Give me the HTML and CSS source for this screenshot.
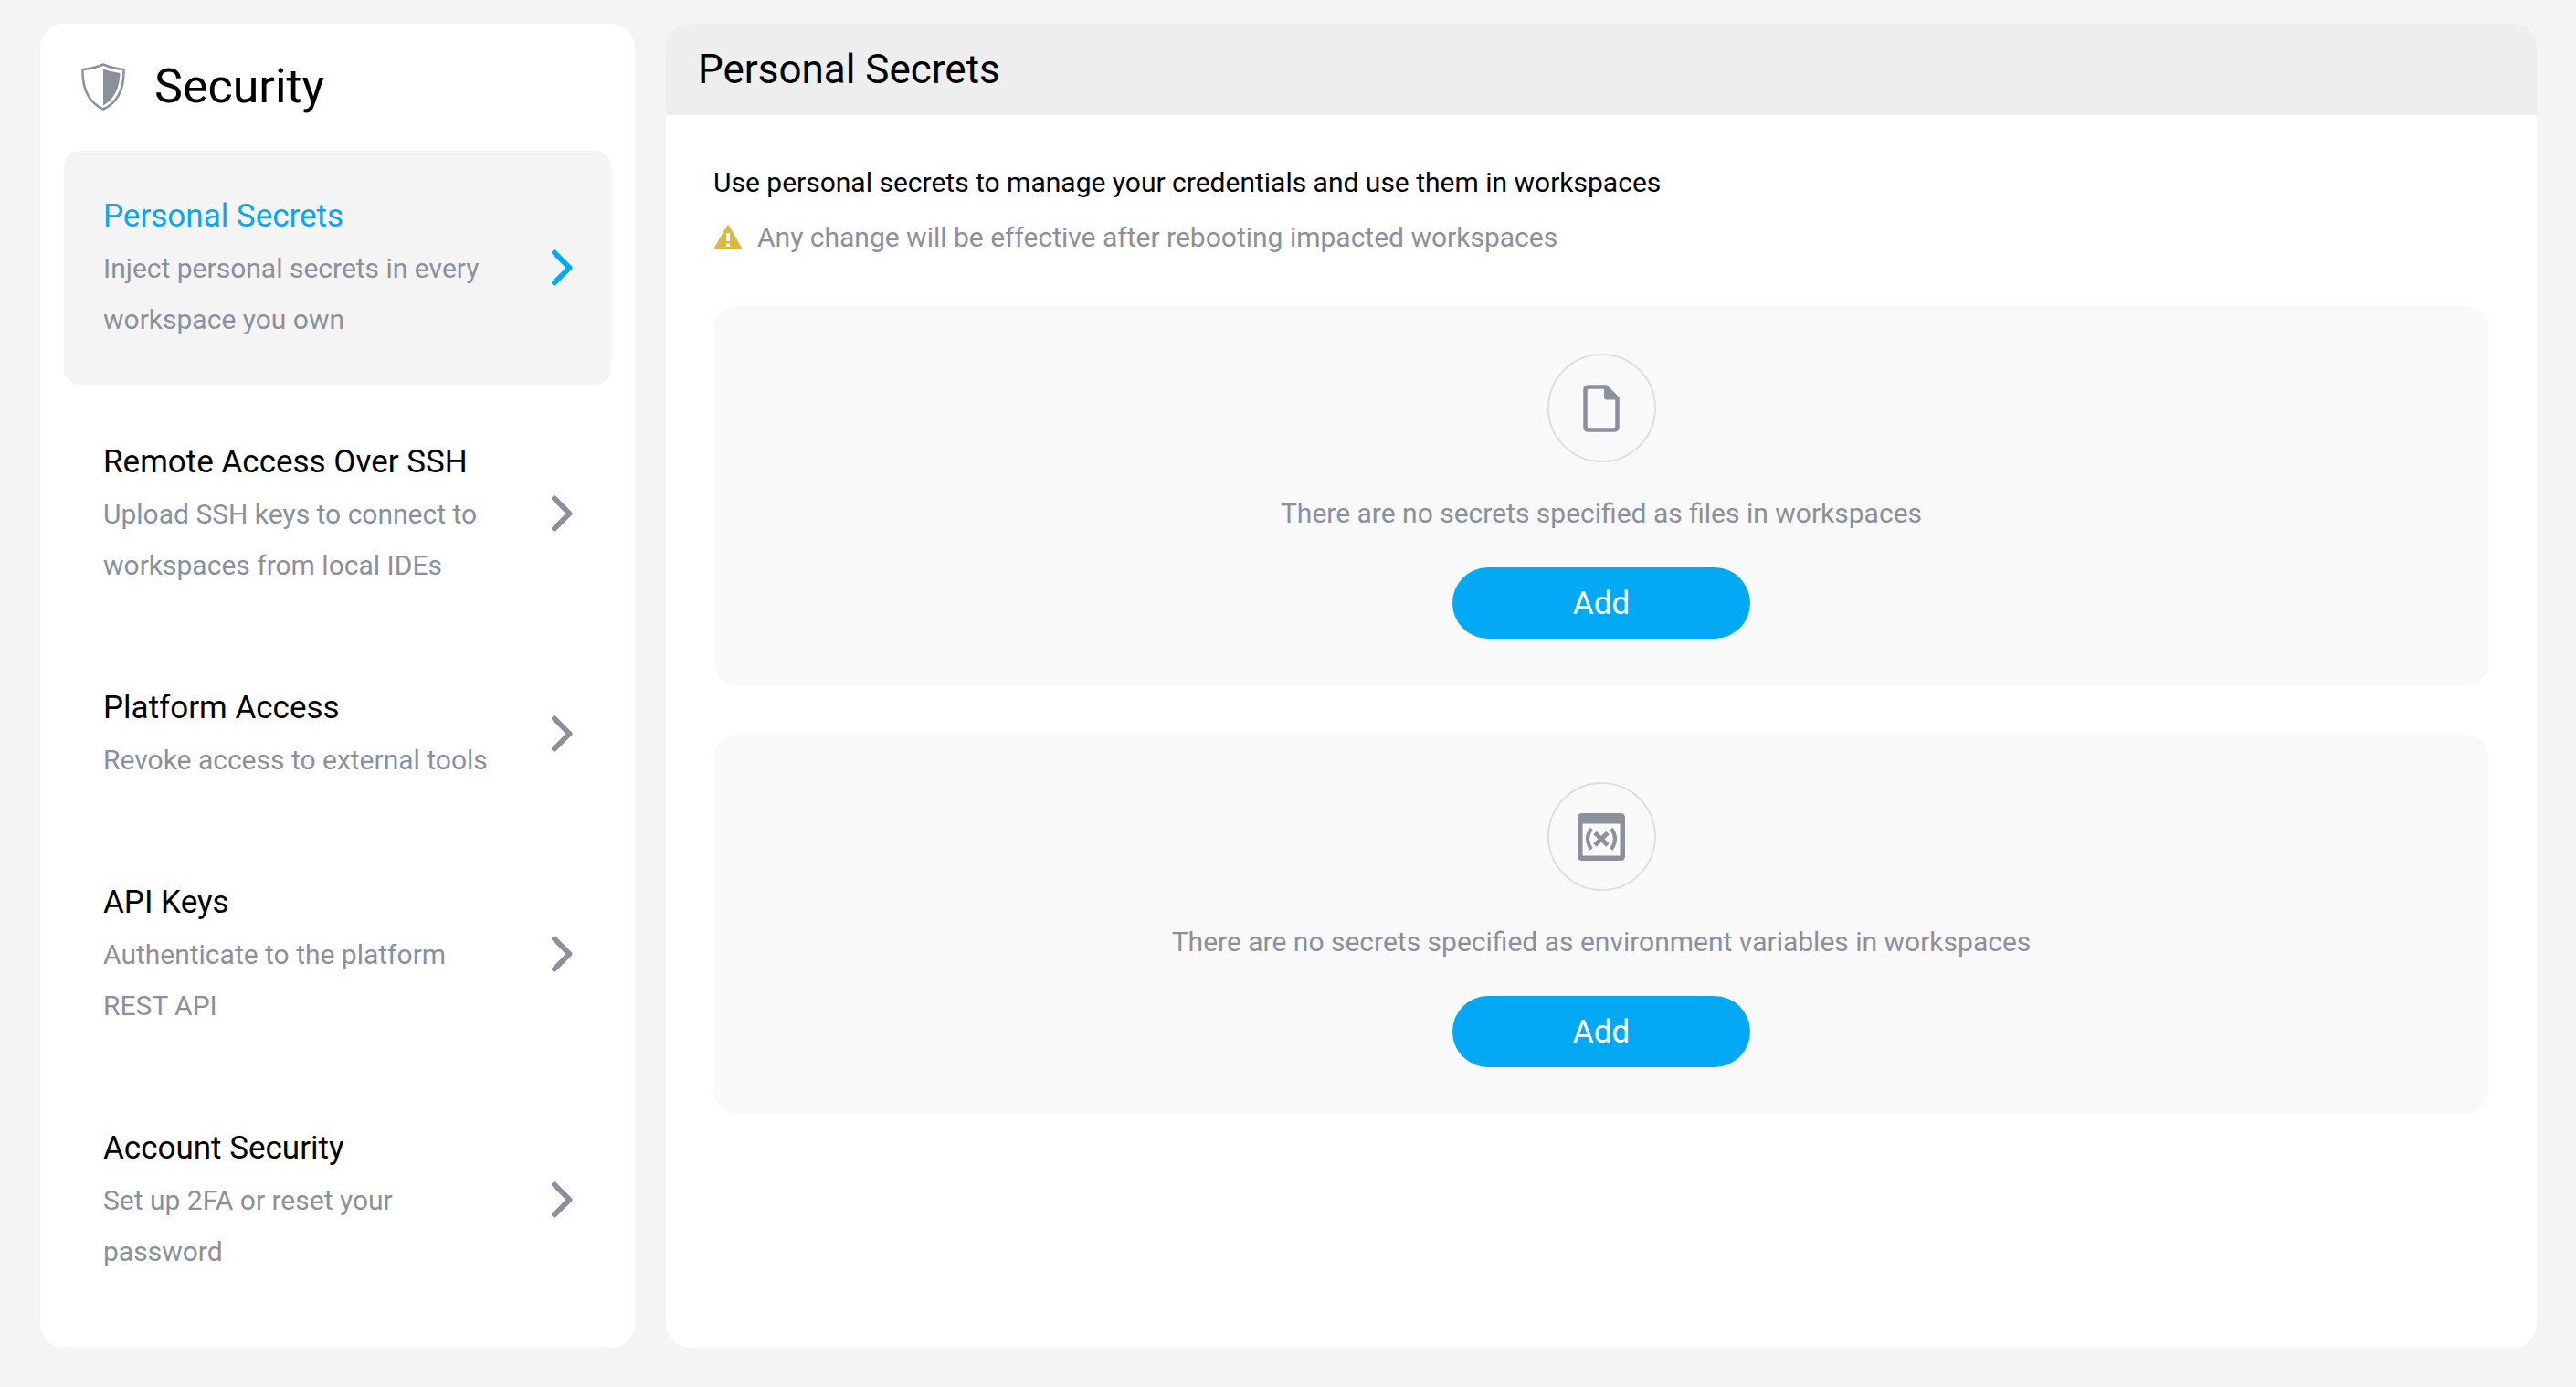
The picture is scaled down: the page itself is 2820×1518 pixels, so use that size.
FILE: index.html
```html
<!DOCTYPE html>
<html lang="en">
<head>
    <meta charset="UTF-8">
    <meta name="viewport" content="width=device-width, initial-scale=1.0">
    <title>Security</title>
    <link rel="stylesheet" href="styles.css">
</head>
<body>
    <aside class="sidebar">
        <header class="sidebar-header">
            <svg class="shield" viewBox="0 0 48 52" aria-hidden="true">
                <path d="M24 1.5 Q34 6 46.5 7 C47 27 40 43 24 50.5 C8 43 1 27 1.5 7 Q14 6 24 1.5 Z" fill="none" stroke="currentColor" stroke-width="2.5" stroke-linejoin="round"/>
                <path d="M24 6.5 Q33 10 42.500 11 C42 27 36 40 24 46.500 Z" fill="currentColor"/>
            </svg>
            <h1>Security</h1>
        </header>
        <nav class="menu">
            <a class="menu-item active" href="#personal-secrets" aria-current="page">
                <span class="menu-text">
                    <span class="menu-title">Personal Secrets</span>
                    <span class="menu-desc">Inject personal secrets in every workspace you own</span>
                </span>
                <svg class="chevron" viewBox="0 0 24 40" aria-hidden="true"><path d="M3 3.500 L19.500 20 L3 36.500"/></svg>
            </a>
            <a class="menu-item" href="#ssh">
                <span class="menu-text">
                    <span class="menu-title">Remote Access Over SSH</span>
                    <span class="menu-desc">Upload SSH keys to connect to workspaces from local IDEs</span>
                </span>
                <svg class="chevron" viewBox="0 0 24 40" aria-hidden="true"><path d="M3 3.500 L19.500 20 L3 36.500"/></svg>
            </a>
            <a class="menu-item" href="#platform">
                <span class="menu-text">
                    <span class="menu-title">Platform Access</span>
                    <span class="menu-desc">Revoke access to external tools</span>
                </span>
                <svg class="chevron" viewBox="0 0 24 40" aria-hidden="true"><path d="M3 3.500 L19.500 20 L3 36.500"/></svg>
            </a>
            <a class="menu-item" href="#api-keys">
                <span class="menu-text">
                    <span class="menu-title">API Keys</span>
                    <span class="menu-desc">Authenticate to the platform REST API</span>
                </span>
                <svg class="chevron" viewBox="0 0 24 40" aria-hidden="true"><path d="M3 3.500 L19.500 20 L3 36.500"/></svg>
            </a>
            <a class="menu-item" href="#account">
                <span class="menu-text">
                    <span class="menu-title">Account Security</span>
                    <span class="menu-desc">Set up 2FA or reset your password</span>
                </span>
                <svg class="chevron" viewBox="0 0 24 40" aria-hidden="true"><path d="M3 3.500 L19.500 20 L3 36.500"/></svg>
            </a>
        </nav>
    </aside>

    <main class="content" id="personal-secrets">
        <header class="content-header">
            <h2>Personal Secrets</h2>
        </header>
        <div class="content-body">
            <p class="intro">Use personal secrets to manage your credentials and use them in workspaces</p>
            <p class="warning">
                <svg class="warning-icon" viewBox="0 0 32 28" aria-hidden="true">
                    <path d="M16 2 L29.500 25.500 H2.500 Z" fill="currentColor" stroke="currentColor" stroke-width="3" stroke-linejoin="round"/>
                    <path d="M14 9 H18 V18 H14 Z M14 20.500 H18 V24 H14 Z" fill="#fff"/>
                </svg>
                Any change will be effective after rebooting impacted workspaces
            </p>

            <section class="empty-box">
                <span class="circle">
                    <svg class="file-icon" viewBox="0 0 40 52" aria-hidden="true">
                        <path d="M6 2.500 H25 L37.500 15 V46 Q37.500 49.500 34 49.500 H6 Q2.500 49.500 2.500 46 V6 Q2.500 2.500 6 2.500 Z" fill="none" stroke="currentColor" stroke-width="4.500"/>
                        <path d="M23 2 H26 L38 14 V16.500 H26 Q23 16.500 23 13.500 Z" fill="currentColor"/>
                    </svg>
                </span>
                <p>There are no secrets specified as files in workspaces</p>
                <button type="button">Add</button>
            </section>

            <section class="empty-box">
                <span class="circle">
                    <svg class="env-icon" viewBox="0 0 52 52" aria-hidden="true">
                        <path fill-rule="evenodd" d="M5 0 H47 Q52 0 52 5 V47 Q52 52 47 52 H5 Q0 52 0 47 V5 Q0 0 5 0 Z M5.500 11.500 V46.500 H46.500 V11.500 Z" fill="currentColor"/>
                        <path d="M15 17 Q7 28 15 39.500 M37 17 Q45 28 37 39.500" fill="none" stroke="currentColor" stroke-width="4"/>
                        <path d="M19 21.500 L33 35 M33 21.500 L19 35" fill="none" stroke="currentColor" stroke-width="5"/>
                    </svg>
                </span>
                <p>There are no secrets specified as environment variables in workspaces</p>
                <button type="button">Add</button>
            </section>
        </div>
    </main>
</body>
</html>
```
FILE: styles.css
```css
* {
    box-sizing: border-box;
}
body {
    display: flex;
    gap: 34px;
    min-height: 100vh;
    margin: 0;
    padding: 26px 43px 43px 44px;
    background: #f4f4f4;
    color: #000;
    font-family: Roboto, sans-serif;
    font-size: 30px;
    line-height: 56px;
}
h1, h2, p {
    margin: 0;
    font-weight: 400;
}
.sidebar {
    flex: 0 0 651px;
    padding: 26px;
    border-radius: 26px;
    background: #fff;
}
.sidebar-header {
    display: flex;
    align-items: center;
    gap: 32px;
    height: 86px;
    margin-bottom: 27px;
    padding: 0 19px;
}
.sidebar-header h1 {
    font-size: 52px;
}
.shield {
    width: 48px;
    height: 52px;
    color: #8c8f9c;
}
.menu {
    display: flex;
    flex-direction: column;
    gap: 13px;
}
.menu-item {
    display: flex;
    align-items: center;
    justify-content: space-between;
    padding: 43px 41px 43px 43px;
    border-radius: 18px;
    color: #8c8f9c;
    text-decoration: none;
}
.menu-item.active {
    background: #f4f4f4;
}
.menu-text {
    flex: 0 1 440px;
}
.menu-title,
.menu-desc {
    display: block;
}
.menu-title {
    color: #000;
    font-size: 35px;
    line-height: 58px;
}
.chevron {
    flex: none;
    width: 24px;
    height: 40px;
    fill: none;
    stroke: currentColor;
    stroke-width: 6;
    stroke-linecap: round;
    stroke-linejoin: round;
}
.active .menu-title,
.active .chevron {
    color: #03a9f4;
}
.content {
    flex: 1;
    overflow: hidden;
    border-radius: 26px;
    background: #fff;
}
.content-header {
    padding: 22px 35px;
    background: #eee;
}
.content-header h2 {
    font-size: 44px;
}
.content-body {
    padding: 46px 52px;
}
.warning {
    display: flex;
    align-items: center;
    gap: 16px;
    margin: 4px 0 47px;
    color: #8c8f9c;
}
.warning-icon {
    width: 32px;
    height: 28px;
    color: #dcb83f;
}
.empty-box {
    display: flex;
    flex-direction: column;
    align-items: center;
    padding: 52px 51px 51px;
    border-radius: 26px;
    background: #f9f9f9;
    color: #8c8f9c;
}
.empty-box + .empty-box {
    margin-top: 54px;
}
.circle {
    display: flex;
    align-items: center;
    justify-content: center;
    width: 119px;
    height: 119px;
    margin-bottom: 28px;
    border: 2px solid #dddee3;
    border-radius: 50%;
}
.file-icon {
    width: 40px;
    height: 52px;
}
.env-icon {
    width: 52px;
    height: 52px;
}
.empty-box button {
    width: 326px;
    height: 78px;
    margin-top: 31px;
    border: none;
    border-radius: 39px;
    background: #03a9f4;
    color: #fff;
    font-family: inherit;
    font-size: 35px;
    cursor: pointer;
}
```
